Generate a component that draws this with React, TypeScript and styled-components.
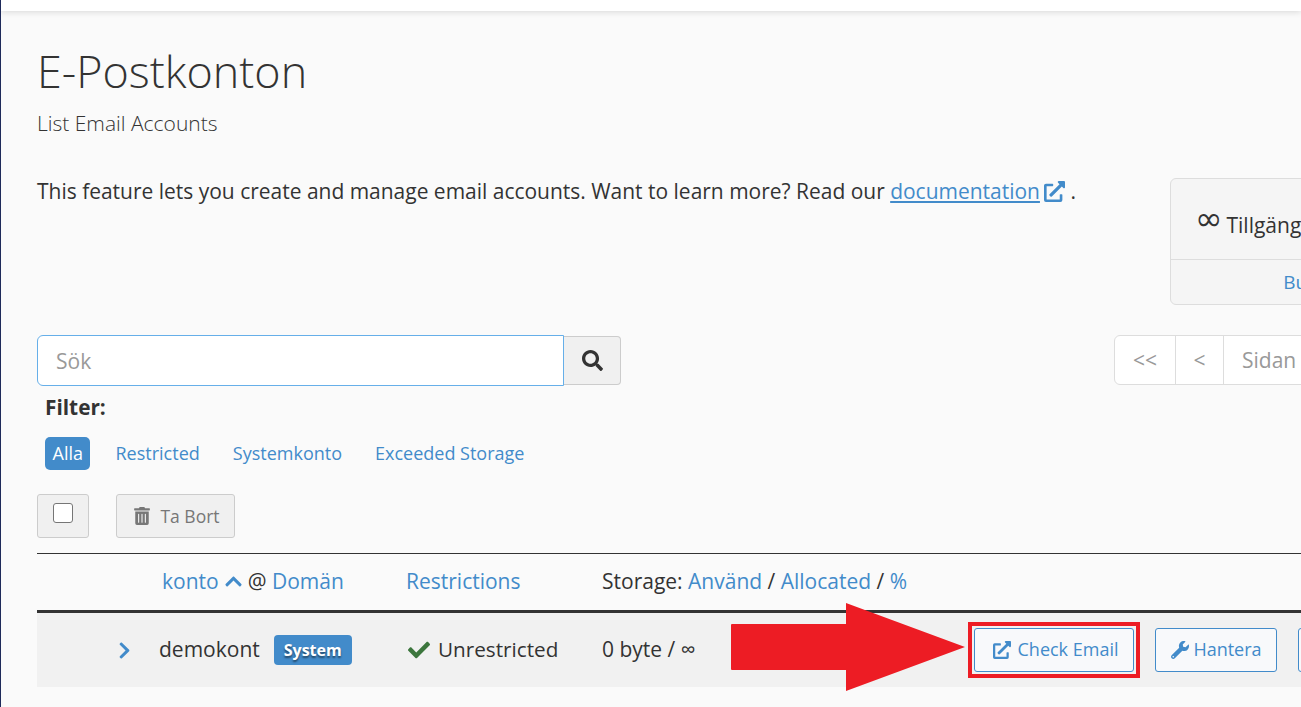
import React from "react";
import styled, { createGlobalStyle } from "styled-components";
import { FaExternalLinkAlt, FaSearch, FaTrashAlt, FaChevronUp, FaChevronRight, FaCheck, FaWrench } from "react-icons/fa";

const Global = createGlobalStyle`
  html, body { margin: 0; padding: 0; height: 707px; overflow: hidden; background: #fafafa; }
  body { font-family: "Open Sans", "Noto Sans", sans-serif; color: #333; }
  * { box-sizing: border-box; }
  a { color: #428bca; text-decoration: none; }
`;

const Frame = styled.div`
  position: relative;
  width: 1301px;
  height: 707px;
  overflow: hidden;
  border-left: 1px solid #1e2a5a;
`;
const TopBar = styled.div`
  height: 11px;
  background: #fff;
  box-shadow: 0 1px 6px rgba(0, 0, 0, 0.14);
`;
const Content = styled.main`
  width: 1660px;
  padding: 31px 0 0 36px;
`;
const Title = styled.h1`
  margin: 0;
  font-size: 44.9px;
  line-height: 58px;
  font-weight: 300;
  color: #333;
`;
const Subtitle = styled.p`
  margin: 9px 0 0;
  font-size: 21px;
  line-height: 28px;
  font-weight: 300;
`;
const IntroRow = styled.div`
  display: flex;
  align-items: flex-start;
  margin-top: 41px;
  height: 127px;
`;
const Intro = styled.p`
  margin: -1px 0 0;
  width: 1133px;
  font-size: 20.97px;
  line-height: 28px;
  a { text-decoration: underline; }
  svg { font-size: 21px; margin-left: 4px; vertical-align: -3px; color: #428bca; }
`;
const StatPanel = styled.aside`
  width: 312px;
  height: 127px;
  border: 1px solid #ddd;
  border-radius: 6px;
  background: #f5f5f5;
`;
const StatBody = styled.div`
  height: 81px;
  padding: 26px 0 0 24px;
  border-bottom: 1px solid #ddd;
  font-size: 21px;
  line-height: 40px;
  display: flex;
  gap: 4px;
`;
const InfinityMark = styled.span`
  font-size: 33px;
  line-height: 28px;
  font-family: "DejaVu Sans", sans-serif;
`;
const StatFoot = styled.div`
  height: 44px;
  text-align: center;
  font-size: 19px;
  line-height: 44px;
`;
const SearchRow = styled.div`
  display: flex;
  align-items: flex-start;
  margin-top: 30px;
  height: 51px;
`;
const SearchInput = styled.div`
  width: 527px;
  height: 51px;
  padding-left: 18px;
  background: #fff;
  border: 1px solid #66afe9;
  border-radius: 6px 0 0 6px;
  font-size: 21px;
  line-height: 51px;
  color: #999;
`;
const SearchButton = styled.div`
  width: 57px;
  height: 49px;
  margin-top: 1px;
  display: flex;
  align-items: center;
  justify-content: center;
  background: #f0f0f0;
  border: 1px solid #ccc;
  border-left: 0;
  border-radius: 0 4px 4px 0;
  font-size: 21px;
  color: #333;
`;
const Pager = styled.div`
  display: flex;
  margin-left: 493px;
  height: 50px;
  background: #fff;
  border: 1px solid #ddd;
  border-radius: 6px;
  font-size: 21px;
  line-height: 48px;
  color: #999;
`;
const PagerCell = styled.span<{ $w: number }>`
  width: ${(p) => p.$w}px;
  text-align: center;
  border-right: 1px solid #ddd;
`;
const PagerLabel = styled.span`
  padding: 0 18px;
  white-space: nowrap;
`;
const FilterLabel = styled.div`
  margin: 7px 0 0 8px;
  font-size: 20.8px;
  line-height: 28px;
  font-weight: 700;
`;
const FilterRow = styled.div`
  display: flex;
  align-items: center;
  margin: 16px 0 0 8px;
  height: 33px;
  gap: 33px;
  font-size: 18px;
`;
const FilterLink = styled.a<{ $active?: boolean }>`
  height: 33px;
  line-height: 33px;
  border-radius: 5px;
  ${(p) => (p.$active ? "background:#428bca;color:#fff;padding:0 7.5px;margin-right:-8px;" : "")}
`;
const ActionRow = styled.div`
  display: flex;
  margin-top: 24px;
  gap: 27px;
  height: 44px;
`;
const CheckHolder = styled.div`
  width: 52px;
  height: 44px;
  display: flex;
  justify-content: center;
  padding-top: 8px;
  background: #f0f0f0;
  border: 1px solid #ccc;
  border-radius: 3px;
`;
const CheckBox = styled.span`
  width: 20px;
  height: 20px;
  background: #fff;
  border: 1px solid #767676;
  border-radius: 3px;
`;
const DeleteButton = styled.div`
  width: 119px;
  height: 44px;
  display: flex;
  align-items: center;
  justify-content: center;
  gap: 9px;
  padding-left: 2px;
  background: #f0f0f0;
  border: 1px solid #ccc;
  border-radius: 3px;
  font-size: 17.5px;
  color: #777;
  svg { font-size: 18px; }
`;
const Table = styled.section`
  margin-top: 15px;
  width: 1500px;
  border-top: 1px solid #333;
`;
const HeadRow = styled.div`
  display: grid;
  grid-template-columns: 125px 244px 196px 1fr;
  height: 59px;
  align-items: center;
  border-bottom: 3px solid #333;
  font-size: 21px;
  padding-bottom: 2px;
  svg { font-size: 19px; vertical-align: -2px; color: #428bca; margin: 0 5px; }
`;
const BodyRow = styled.div`
  display: grid;
  grid-template-columns: 76px 293px 196px 372px 1fr;
  height: 74px;
  align-items: center;
  background: #f1f1f1;
  font-size: 21px;
`;
const Expand = styled.span`
  color: #428bca;
  font-size: 19px;
  display: flex;
  justify-content: flex-end;
  margin-right: -21px;
`;
const User = styled.div`
  display: flex;
  align-items: center;
  gap: 14px;
  margin-left: 46px;
`;
const CellText = styled.span`
  margin-bottom: 2px;
`;
const Badge = styled.span`
  height: 30px;
  padding: 0 10px;
  background: #428bca;
  border-radius: 4px;
  color: #fff;
  font-size: 16px;
  line-height: 30px;
  font-weight: 700;
  text-shadow: 0 2px 2px rgba(0, 0, 0, 0.5);
`;
const Status = styled.div`
  display: flex;
  align-items: center;
  gap: 8px;
  margin-left: 2px;
  padding-bottom: 2px;
  font-size: 20.7px;
  svg { color: #3c763d; font-size: 22px; margin-top: 2px; }
`;
const Buttons = styled.div`
  display: flex;
  gap: 21px;
`;
const OutlineButton = styled.a<{ $w: number; $gap: number; $shift: number }>`
  width: ${(p) => p.$w}px;
  height: 44px;
  flex: none;
  display: flex;
  align-items: center;
  justify-content: center;
  gap: ${(p) => p.$gap}px;
  padding: 0 0 2px ${(p) => p.$shift}px;
  border: 1px solid #428bca;
  border-radius: 3px;
  background: #f8f9fb;
  font-size: 18px;
  svg { font-size: 18px; margin-top: 2px; }
`;
const Highlight = styled.span`
  flex: none;
  margin: -6px;
  padding: 2px;
  border: 4px solid #ed1c24;
`;
const Arrow = styled.svg`
  position: absolute;
  left: 729px;
  top: 603px;
`;

export default function App() {
  return (
    <Frame>
      <Global />
      <TopBar />
      <Content>
        <Title>E-Postkonton</Title>
        <Subtitle>List Email Accounts</Subtitle>
        <IntroRow>
          <Intro>
            This feature lets you create and manage email accounts. Want to learn more? Read our{" "}
            <a href="#">documentation</a>
            <FaExternalLinkAlt /> .
          </Intro>
          <StatPanel>
            <StatBody>
              <InfinityMark>∞</InfinityMark>
              <span>Tillgängliga konton</span>
            </StatBody>
            <StatFoot>
              <a href="#">Buy More</a>
            </StatFoot>
          </StatPanel>
        </IntroRow>
        <SearchRow>
          <SearchInput>Sök</SearchInput>
          <SearchButton><FaSearch /></SearchButton>
          <Pager>
            <PagerCell $w={61}>&lt;&lt;</PagerCell>
            <PagerCell $w={48}>&lt;</PagerCell>
            <PagerLabel>Sidan 1 av 1</PagerLabel>
          </Pager>
        </SearchRow>
        <FilterLabel>Filter:</FilterLabel>
        <FilterRow>
          <FilterLink $active href="#">Alla</FilterLink>
          <FilterLink href="#">Restricted</FilterLink>
          <FilterLink href="#">Systemkonto</FilterLink>
          <FilterLink href="#">Exceeded Storage</FilterLink>
        </FilterRow>
        <ActionRow>
          <CheckHolder><CheckBox /></CheckHolder>
          <DeleteButton><FaTrashAlt />Ta Bort</DeleteButton>
        </ActionRow>
        <Table>
          <HeadRow>
            <span />
            <span><a href="#">konto</a><FaChevronUp />@ <a href="#">Domän</a></span>
            <a href="#">Restrictions</a>
            <span>Storage: <a href="#">Använd</a> / <a href="#">Allocated</a> / <a href="#">%</a></span>
          </HeadRow>
          <BodyRow>
            <Expand><FaChevronRight /></Expand>
            <User>
              <CellText>demokont</CellText>
              <Badge>System</Badge>
            </User>
            <Status><FaCheck />Unrestricted</Status>
            <CellText>0 byte / ∞</CellText>
            <Buttons>
              <Highlight>
                <OutlineButton $w={160} $gap={7} $shift={3} href="#"><FaExternalLinkAlt />Check Email</OutlineButton>
              </Highlight>
              <OutlineButton $w={122} $gap={4} $shift={1} href="#"><FaWrench />Hantera</OutlineButton>
              <OutlineButton $w={122} $gap={7} $shift={0} href="#"><FaTrashAlt />Ta Bort</OutlineButton>
            </Buttons>
          </BodyRow>
        </Table>
      </Content>
      <Arrow width="236" height="88" viewBox="0 0 236 88">
        <path d="M2 21H116V0L235 44L116 88V67H2a1 1 0 0 1-1-1V22a1 1 0 0 1 1-1Z" fill="#ed1c24" />
      </Arrow>
    </Frame>
  );
}
